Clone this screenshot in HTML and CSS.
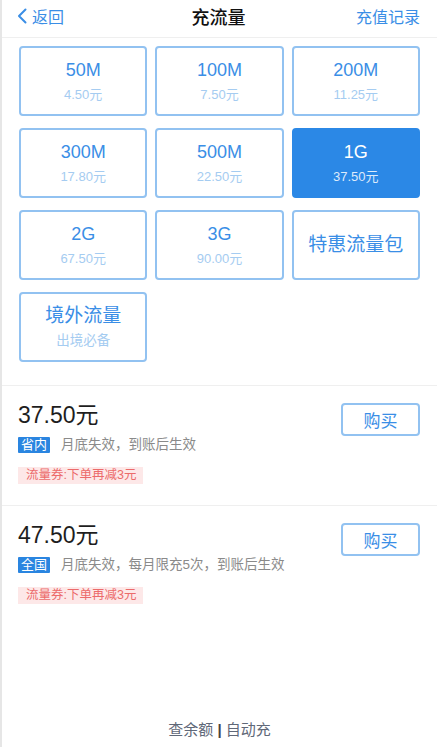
FILE: index.html
```html
<!DOCTYPE html>
<html lang="zh-CN">
<head>
<meta charset="utf-8">
<title>充流量</title>
<link rel="stylesheet" href="styles.css">
</head>
<body>
<div class="page">
  <header class="nav">
    <a class="nav-back">
      <svg class="chev" width="10" height="16" viewBox="0 0 10 16"><path d="M8.5 1.5 L2 8 L8.5 14.5" fill="none" stroke="#3a8ee6" stroke-width="2" stroke-linecap="round" stroke-linejoin="round"/></svg>
      <span>返回</span>
    </a>
    <h1 class="nav-title">充流量</h1>
    <a class="nav-right">充值记录</a>
  </header>

  <section class="grid">
    <div class="card"><div class="card-main">50M</div><div class="card-sub">4.50元</div></div>
    <div class="card"><div class="card-main">100M</div><div class="card-sub">7.50元</div></div>
    <div class="card"><div class="card-main">200M</div><div class="card-sub">11.25元</div></div>
    <div class="card"><div class="card-main">300M</div><div class="card-sub">17.80元</div></div>
    <div class="card"><div class="card-main">500M</div><div class="card-sub">22.50元</div></div>
    <div class="card card-active"><div class="card-main">1G</div><div class="card-sub">37.50元</div></div>
    <div class="card"><div class="card-main">2G</div><div class="card-sub">67.50元</div></div>
    <div class="card"><div class="card-main">3G</div><div class="card-sub">90.00元</div></div>
    <div class="card"><div class="card-main card-cn">特惠流量包</div></div>
    <div class="card"><div class="card-main card-cn">境外流量</div><div class="card-sub card-sub-cn">出境必备</div></div>
  </section>

  <section class="plan">
    <div class="plan-info">
      <div class="plan-price">37.50元</div>
      <div class="plan-row"><span class="tag">省内</span><span class="plan-desc">月底失效，到账后生效</span></div>
      <div class="coupon">流量券:下单再减3元</div>
    </div>
    <button class="buy">购买</button>
  </section>

  <section class="plan">
    <div class="plan-info">
      <div class="plan-price">47.50元</div>
      <div class="plan-row"><span class="tag">全国</span><span class="plan-desc">月底失效，每月限充5次，到账后生效</span></div>
      <div class="coupon">流量券:下单再减3元</div>
    </div>
    <button class="buy">购买</button>
  </section>

  <footer class="foot">查余额 <span class="bar">|</span> 自动充</footer>
</div>
</body>
</html>
```

FILE: styles.css
```css
* { box-sizing: border-box; }
html, body { margin: 0; padding: 0; background: #fff; }
body {
  font-family: "Liberation Sans", "Noto Sans CJK SC", sans-serif;
  color: #222;
}
.page {
  width: 437px;
  height: 747px;
  border-left: 2px solid #e6e6e6;
  display: flex;
  flex-direction: column;
  overflow: hidden;
}
.nav {
  height: 38px;
  border-bottom: 1px solid #efefef;
  display: grid;
  grid-template-columns: 1fr auto 1fr;
  align-items: center;
  padding: 0 17px 5px 15px;
}
.nav-back {
  display: flex;
  align-items: center;
  gap: 5px;
  color: #3a8ee6;
  font-size: 16px;
}
.chev { display: block; }
.nav-title {
  margin: 0;
  font-size: 18px;
  font-weight: 500;
  color: #111;
}
.nav-right {
  justify-self: end;
  color: #3a8ee6;
  font-size: 16px;
}
.grid {
  display: grid;
  grid-template-columns: repeat(3, 1fr);
  grid-auto-rows: 70px;
  gap: 12px 8px;
  padding: 8px 17px 23px 17px;
}
.card {
  border: 2px solid #92c2f1;
  border-radius: 4px;
  display: flex;
  flex-direction: column;
  align-items: center;
  justify-content: center;
  color: #3a8ee6;
}
.card-main {
  font-size: 18px;
  line-height: 26px;
}
.card-cn { font-size: 19px; }
.card-sub {
  margin-top: 2px;
  font-size: 13px;
  line-height: 20px;
  color: #a5ccf1;
}
.card-sub-cn { font-size: 13.5px; }
.card-active {
  background: #2b88e6;
  border-color: #2b88e6;
  color: #fff;
}
.card-active .card-sub { color: rgba(255,255,255,0.85); }
.plan {
  border-top: 1px solid #efefef;
  display: flex;
  justify-content: space-between;
  align-items: flex-start;
  padding: 15px 17px 21px 16px;
}
.plan-price {
  font-size: 23px;
  line-height: 28px;
  color: #1e1e1e;
}
.plan-row {
  display: flex;
  align-items: center;
  margin-top: 8px;
}
.tag {
  background: #2a85e0;
  color: #fff;
  font-size: 13px;
  line-height: 16px;
  padding: 0 3px;
  border-radius: 1px;
}
.plan-desc {
  margin-left: 11px;
  font-size: 13.5px;
  line-height: 16px;
  color: #8a8a8a;
}
.coupon {
  display: inline-block;
  margin-top: 14px;
  background: #fde8e8;
  color: #ec6b6b;
  font-size: 12.5px;
  line-height: 17px;
  padding: 0 7px 0 8px;
}
.buy {
  margin-top: 2px;
  width: 79px;
  height: 33px;
  border: 2px solid #92c2f1;
  border-radius: 4px;
  background: #fff;
  color: #3a8ee6;
  font-family: "Liberation Sans", "Noto Sans CJK SC", sans-serif;
  font-size: 17px;
  padding: 0;
}
.foot {
  margin-top: auto;
  text-align: center;
  font-size: 15px;
  line-height: 20px;
  color: #606878;
  padding-bottom: 7px;
}
.bar { color: #444; font-weight: bold; }
```
